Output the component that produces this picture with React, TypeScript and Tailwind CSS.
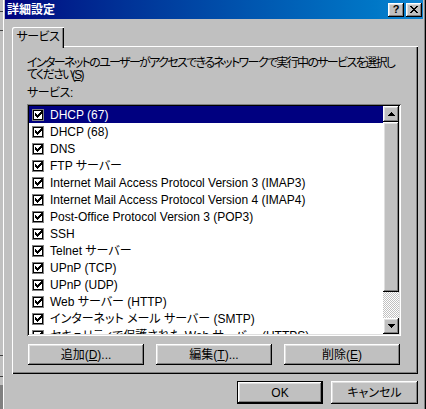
const raised =
  'shadow-[inset_-1px_-1px_#000,inset_1px_1px_#fff,inset_-2px_-2px_#808080,inset_2px_2px_#dfdfdf]'

const services = [
  'DHCP (67)',
  'DHCP (68)',
  'DNS',
  'FTP サーバー',
  'Internet Mail Access Protocol Version 3 (IMAP3)',
  'Internet Mail Access Protocol Version 4 (IMAP4)',
  'Post-Office Protocol Version 3 (POP3)',
  'SSH',
  'Telnet サーバー',
  'UPnP (TCP)',
  'UPnP (UDP)',
  'Web サーバー (HTTP)',
  'インターネット メール サーバー (SMTP)',
  'セキュリティで保護された Web サーバー (HTTPS)',
]

// ── Pixel glyphs ─────────────────────────────────────────────────────────
function CheckMark() {
  return (
    <svg width="7" height="7" viewBox="0 0 7 7" shapeRendering="crispEdges" aria-hidden="true">
      <path
        fill="#000"
        d="M6 0h1v1h-1z M5 1h2v1h-2z M0 2h1v1h-1z M4 2h3v1h-3z M0 3h2v1h-2z M3 3h3v1h-3z M0 4h5v1h-5z M1 5h3v1h-3z M2 6h1v1h-1z"
      />
    </svg>
  )
}

function CloseGlyph() {
  return (
    <svg width="8" height="7" viewBox="0 0 8 7" shapeRendering="crispEdges" aria-hidden="true">
      <path
        fill="#000"
        d="M0 0h2v1h-2z M6 0h2v1h-2z M1 1h2v1h-2z M5 1h2v1h-2z M2 2h4v1h-4z M3 3h2v1h-2z M2 4h4v1h-4z M1 5h2v1h-2z M5 5h2v1h-2z M0 6h2v1h-2z M6 6h2v1h-2z"
      />
    </svg>
  )
}

function Arrow({ down = false }: { down?: boolean }) {
  return (
    <svg
      width="7"
      height="4"
      viewBox="0 0 7 4"
      shapeRendering="crispEdges"
      aria-hidden="true"
      className={down ? 'rotate-180' : ''}
    >
      <path fill="#000" d="M3 0h1v1h-1z M2 1h3v1h-3z M1 2h5v1h-5z M0 3h7v1h-7z" />
    </svg>
  )
}

// ── Pieces ───────────────────────────────────────────────────────────────
function TitleBar() {
  return (
    <div className="flex h-[19px] shrink-0 items-center bg-linear-to-r from-[#000080] to-[#1084d0] pl-[2px] pr-[1px]">
      <span className="flex-1 text-[12px] font-bold leading-none text-white">詳細設定</span>
      <div className="flex gap-[2px]">
        <div className={`flex h-[14px] w-[16px] items-center justify-center bg-[#c0c0c0] ${raised}`}>
          <span className="text-[11px] font-bold leading-none text-black">?</span>
        </div>
        <div className={`flex h-[14px] w-[16px] items-center justify-center bg-[#c0c0c0] ${raised}`}>
          <CloseGlyph />
        </div>
      </div>
    </div>
  )
}

function ServiceRow({ label, selected }: { label: string; selected: boolean }) {
  return (
    <div
      className={[
        'flex h-[17px] shrink-0 items-center gap-[6px] whitespace-nowrap pl-[3px]',
        selected ? 'bg-[#000080] text-white' : 'text-black',
      ].join(' ')}
    >
      <div className="flex h-[12px] w-[12px] shrink-0 items-center justify-center bg-white shadow-[inset_0_0_0_1px_#808080,inset_0_0_0_2px_#000]">
        <CheckMark />
      </div>
      <span className="text-[12px] leading-none">{label}</span>
    </div>
  )
}

function ScrollBar() {
  return (
    <div className="flex w-[16px] shrink-0 flex-col">
      <div className={`flex h-[16px] items-center justify-center bg-[#c0c0c0] ${raised}`}>
        <Arrow />
      </div>
      <div className={`h-[170px] bg-[#c0c0c0] ${raised}`} />
      <div className="h-[26px] bg-[repeating-conic-gradient(#c0c0c0_0%_25%,#ffffff_0%_50%)] bg-[length:2px_2px]" />
      <div className={`flex h-[16px] items-center justify-center bg-[#c0c0c0] ${raised}`}>
        <Arrow down />
      </div>
    </div>
  )
}

function PushButton({
  children,
  className = '',
  isDefault = false,
}: {
  children: React.ReactNode
  className?: string
  isDefault?: boolean
}) {
  return (
    <div className={isDefault ? `border border-black ${className}` : className}>
      <div
        className={`flex h-full w-full items-center justify-center bg-[#c0c0c0] text-[12px] leading-none text-black ${raised}`}
      >
        {children}
      </div>
    </div>
  )
}

function LeftStrip() {
  return (
    <div className="flex w-[3px] shrink-0 flex-col">
      <div className="mt-[11px] h-px bg-[#404040]" />
      <div className="mt-[18px] h-px bg-[#404040]" />
      <div className="mt-[324px] h-px bg-[#404040]" />
      <div className="mt-[20px] h-px bg-[#404040]" />
      <div className="mt-[8px] flex-1 bg-[#808080]" />
    </div>
  )
}

export default function App() {
  return (
    <div className="flex h-[409px] w-[426px] overflow-hidden bg-[#c0c0c0] [font-family:'Liberation_Sans','Noto_Sans_CJK_JP',sans-serif] [font-feature-settings:'palt']">
      <LeftStrip />
      <div className="flex min-w-0 flex-1 flex-col border-l border-white pl-px pr-[3px] shadow-[inset_-1px_0_#000,inset_-2px_0_#808080]">
        <TitleBar />

        <div className="flex min-w-0 flex-1 flex-col pl-[7px] pr-[5px] pt-[8px]">
          {/* Tab strip */}
          <div className="flex">
            <div className="relative z-10 -mb-[2px] flex h-[21px] w-[52px] items-center justify-center rounded-tl-[2px] bg-[#c0c0c0] pb-[2px] shadow-[inset_1px_1px_#fff,inset_-1px_0_#000,inset_-2px_0_#808080]">
              <span className="text-[12px] leading-none tracking-[-0.5px] text-black">サービス</span>
            </div>
          </div>

          {/* Tab panel */}
          <div className="flex h-[328px] min-w-0 flex-col overflow-hidden pl-[15px] pr-[17px] pt-[11px] shadow-[inset_1px_1px_#fff,inset_-1px_-1px_#000,inset_-2px_-2px_#808080]">
            <p className="whitespace-nowrap text-[12px] leading-[12px] tracking-[-1.65px] text-black">
              インターネットのユーザーがアクセスできるネットワークで実行中のサービスを選択し
              <br />
              てください(<span className="underline">S</span>)
            </p>
            <p className="mt-[6px] text-[12px] leading-[12px] tracking-[-0.5px] text-black">サービス:</p>

            {/* List box */}
            <div className="mt-[5px] flex h-[232px] shrink-0 bg-white p-[2px] shadow-[inset_1px_1px_#808080,inset_-1px_-1px_#fff,inset_2px_2px_#000,inset_-2px_-2px_#dfdfdf]">
              <div className="flex min-w-0 flex-1 flex-col overflow-hidden">
                {services.map((s, i) => (
                  <ServiceRow key={s} label={s} selected={i === 0} />
                ))}
              </div>
              <ScrollBar />
            </div>

            <div className="ml-px mt-[8px] flex gap-[12px]">
              <PushButton className="h-[21px] w-[116px]">
                追加(<span className="underline">D</span>)...
              </PushButton>
              <PushButton className="h-[21px] w-[116px]">
                編集(<span className="underline">T</span>)...
              </PushButton>
              <PushButton className="h-[21px] w-[116px]">
                削除(<span className="underline">E</span>)
              </PushButton>
            </div>
          </div>

          {/* Dialog buttons */}
          <div className="mt-[7px] flex justify-end gap-[8px]">
            <PushButton isDefault className="h-[23px] w-[86px]">
              OK
            </PushButton>
            <PushButton className="h-[23px] w-[87px]">キャンセル</PushButton>
          </div>
        </div>
      </div>
    </div>
  )
}
